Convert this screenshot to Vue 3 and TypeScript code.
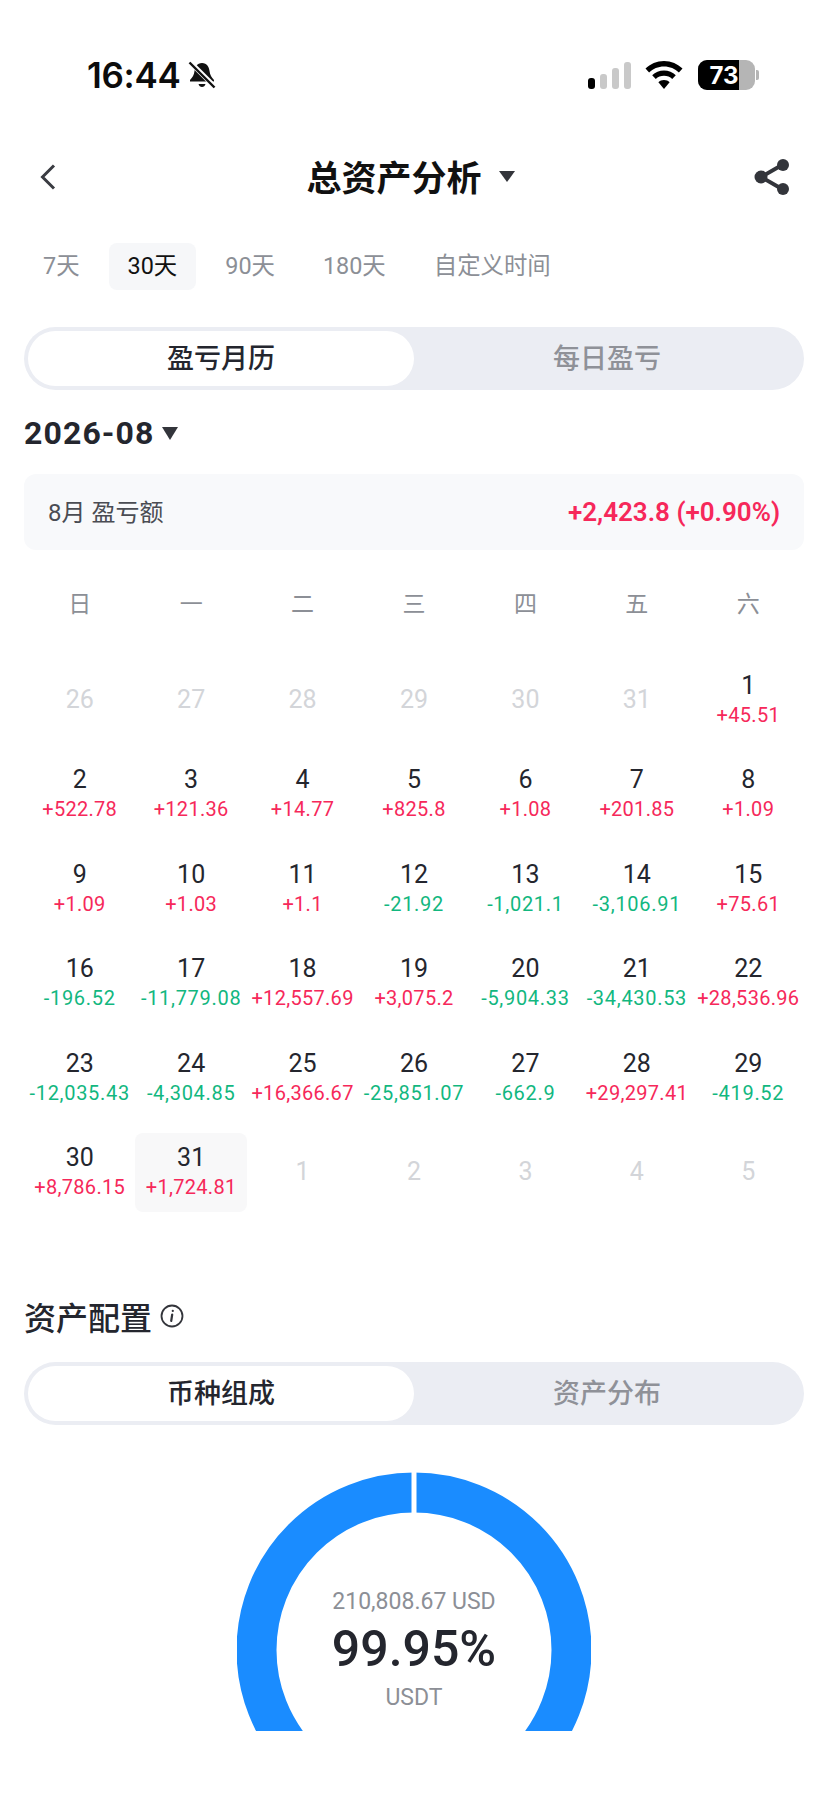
<script setup lang="ts">
interface Cell { day: number; value?: string; muted?: boolean; today?: boolean }
const tabs = ['7天', '30天', '90天', '180天', '自定义时间']
const weekdays = ['日', '一', '二', '三', '四', '五', '六']
const raw: [number, string?][] = [
  [1, '+45.51'], [2, '+522.78'], [3, '+121.36'], [4, '+14.77'], [5, '+825.8'], [6, '+1.08'], [7, '+201.85'], [8, '+1.09'],
  [9, '+1.09'], [10, '+1.03'], [11, '+1.1'], [12, '-21.92'], [13, '-1,021.1'], [14, '-3,106.91'], [15, '+75.61'],
  [16, '-196.52'], [17, '-11,779.08'], [18, '+12,557.69'], [19, '+3,075.2'], [20, '-5,904.33'], [21, '-34,430.53'], [22, '+28,536.96'],
  [23, '-12,035.43'], [24, '-4,304.85'], [25, '+16,366.67'], [26, '-25,851.07'], [27, '-662.9'], [28, '+29,297.41'], [29, '-419.52'],
  [30, '+8,786.15'], [31, '+1,724.81']
]
const cells: Cell[] = [
  ...[26, 27, 28, 29, 30, 31].map((day) => ({ day, muted: true })),
  ...raw.map(([day, value]) => ({ day, value, today: day === 31 })),
  ...[1, 2, 3, 4, 5].map((day) => ({ day, muted: true }))
]
</script>

<template>
  <div class="page">
    <header class="status">
      <div class="status-left">
        <span class="time">16:44</span>
        <svg class="bell" width="28" height="28" viewBox="0 0 28 28">
          <path d="M14 2c-5 0-7 4-7.500 8-.4 4-2 6-4.500 9v1.500h24V19c-2.500-3-4-5-4.500-9C21 6 19 2 14 2z" fill="#111" />
          <path d="M10.500 23h7c-.5 2-1.800 3-3.500 3s-3-1-3.500-3z" fill="#111" />
          <path d="M2 1l25 25" stroke="#fff" stroke-width="5" />
          <path d="M1.500 1.500l25 25" stroke="#111" stroke-width="2.400" />
        </svg>
      </div>
      <div class="status-right">
        <div class="signal">
          <i class="bar b1"></i><i class="bar b2"></i><i class="bar b3"></i><i class="bar b4"></i>
        </div>
        <svg class="wifi" width="38" height="28" viewBox="0 0 38 28">
          <path d="M19 0C11.700 0 5.200 2.900.5 7.600l3.600 3.800C8 7.700 13.200 5.400 19 5.400s11 2.300 14.900 6l3.600-3.800C32.800 2.900 26.300 0 19 0z" fill="#000" />
          <path d="M19 9.500c-4.600 0-8.700 1.800-11.800 4.700l3.600 3.800c2.100-2 5-3.200 8.200-3.200s6.100 1.200 8.200 3.200l3.600-3.800c-3.100-2.900-7.200-4.700-11.800-4.700z" fill="#000" />
          <path d="M19 19c-2.200 0-4.200.9-5.600 2.200L19 28l5.600-6.800C23.200 19.900 21.200 19 19 19z" fill="#000" />
        </svg>
        <div class="battery">
          <div class="battery-body">
            <div class="battery-fill"></div>
            <span class="battery-text">73</span>
          </div>
          <i class="battery-nub"></i>
        </div>
      </div>
    </header>

    <nav class="nav">
      <svg class="back" width="20" height="28" viewBox="0 0 20 28">
        <path d="M16 2.500 4.500 14 16 25.500" fill="none" stroke="#3a3c42" stroke-width="3" />
      </svg>
      <div class="nav-title">
        <span>总资产分析</span>
        <i class="tri nav-tri"></i>
      </div>
      <svg class="share" width="38" height="38" viewBox="0 0 38 38">
        <path d="M29 7 8 19l21 12" fill="none" stroke="#33353b" stroke-width="4" />
        <circle cx="30" cy="7" r="6" fill="#33353b" />
        <circle cx="8" cy="19" r="6.500" fill="#33353b" />
        <circle cx="30" cy="31" r="6" fill="#33353b" />
      </svg>
    </nav>

    <div class="tabs">
      <span v-for="t in tabs" :key="t" class="tab" :class="{ active: t === '30天' }">{{ t }}</span>
    </div>

    <div class="segment first">
      <span class="seg on">盈亏月历</span>
      <span class="seg">每日盈亏</span>
    </div>

    <div class="month">
      <span>2026-08</span>
      <i class="tri month-tri"></i>
    </div>

    <div class="summary">
      <span class="summary-label">8月 盈亏额</span>
      <span class="summary-value">+2,423.8 (+0.90%)</span>
    </div>

    <div class="weekdays">
      <span v-for="w in weekdays" :key="w">{{ w }}</span>
    </div>

    <div class="calendar">
      <div v-for="c in cells" :key="`${c.day}-${c.muted}`" class="cell" :class="{ today: c.today }">
        <span class="day" :class="{ muted: c.muted }">{{ c.day }}</span>
        <span v-if="c.value" class="val" :class="c.value.startsWith('+') ? 'up' : 'down'">{{ c.value }}</span>
      </div>
    </div>

    <div class="section-title">
      <span>资产配置</span>
      <svg width="24" height="24" viewBox="0 0 24 24">
        <circle cx="12" cy="12" r="10.500" fill="none" stroke="#33353b" stroke-width="1.800" />
        <path d="M12.800 6.800v.1M12.200 10.500l-1 6.500" fill="none" stroke="#33353b" stroke-width="2.200" stroke-linecap="round" />
      </svg>
    </div>

    <div class="segment second">
      <span class="seg on">币种组成</span>
      <span class="seg">资产分布</span>
    </div>

    <div class="donut">
      <svg width="354" height="259" viewBox="0 0 354 259">
        <circle cx="177" cy="178" r="157.500" fill="none" stroke="#1a8cff" stroke-width="40" />
        <rect x="174.500" y="0" width="5" height="44" fill="#fff" />
      </svg>
      <div class="donut-text">
        <span class="donut-usd">210,808.67 USD</span>
        <span class="donut-pct">99.95%</span>
        <span class="donut-coin">USDT</span>
      </div>
    </div>
  </div>
</template>

<style scoped>
.page {
  width: 828px;
  height: 1798px;
  overflow: hidden;
  background: #fff;
  box-sizing: border-box;
  font-family: Roboto, "Noto Sans CJK SC", sans-serif;
  color: #24262e;
  display: flex;
  flex-direction: column;
}
.status {
  height: 60px;
  margin-top: 45px;
  padding: 0 69px 0 87px;
  display: flex;
  justify-content: space-between;
  align-items: center;
  flex: none;
}
.status-left { display: flex; align-items: center; gap: 8px; }
.time { font-family: Inter, sans-serif; font-weight: 600; font-size: 35px; color: #0c0c0c; letter-spacing: -.3px; }
.status-right { display: flex; align-items: center; gap: 15px; }
.signal { display: flex; align-items: flex-end; gap: 5px; height: 28px; margin-right: -1px; }
.bar { width: 7px; border-radius: 3px; background: #c9c9c9; }
.b1 { height: 11px; background: #000; }
.b2 { height: 15px; }
.b3 { height: 21px; }
.b4 { height: 27px; }
.battery { display: flex; align-items: center; gap: 1px; }
.battery-body {
  position: relative;
  width: 57px;
  height: 30px;
  border-radius: 9px;
  background: #b5b5b5;
  overflow: hidden;
  display: flex;
  align-items: center;
  justify-content: center;
}
.battery-fill { position: absolute; left: 0; top: 0; bottom: 0; width: 41px; background: #000; }
.battery-text {
  position: relative;
  font-family: Inter, sans-serif;
  font-weight: 700;
  font-size: 24px;
  color: #fff;
  margin-right: 5px;
}
.battery-nub { width: 3px; height: 10px; border-radius: 0 2px 2px 0; background: #b5b5b5; }

.nav {
  height: 72px;
  margin-top: 36px;
  padding: 0 37px 0 38px;
  display: flex;
  align-items: center;
  justify-content: space-between;
  flex: none;
}
.nav-title {
  display: flex;
  align-items: center;
  gap: 17px;
  font-size: 35px;
  font-weight: 700;
  color: #111;
  margin: 0 0 4px 10px;
}
.tri { display: block; width: 0; height: 0; border-style: solid; border-color: #33353b transparent transparent; }
.nav-tri { border-width: 11px 8px 0; margin-top: 2px; }
.tabs {
  display: flex;
  gap: 10px;
  margin-top: 30px;
  padding: 0 24px;
  flex: none;
}
.tab {
  height: 47px;
  line-height: 47px;
  padding: 0 19px;
  font-size: 23.400px;
  color: #8c8f96;
  border-radius: 8px;
}
.tab.active { background: #f6f7f9; color: #111; }

.segment {
  margin: 0 24px;
  height: 63px;
  padding: 4px;
  box-sizing: border-box;
  background: #ebedf3;
  border-radius: 32px;
  display: flex;
  flex: none;
}
.first { margin-top: 37px; }
.second { margin-top: 24px; }
.seg {
  flex: 1;
  text-align: center;
  line-height: 57px;
  font-size: 27px;
  font-weight: 500;
  color: #8f9198;
}
.seg.on { background: #fff; color: #24262e; border-radius: 28px; }

.month {
  display: flex;
  align-items: center;
  gap: 8px;
  margin-top: 22px;
  padding: 0 24px;
  height: 42px;
  font-size: 32px;
  font-weight: 700;
  letter-spacing: 1.100px;
  flex: none;
}
.month-tri { border-width: 13px 8px 0; }
.summary {
  margin: 20px 24px 0;
  height: 76px;
  padding: 0 24px;
  border-radius: 12px;
  background: #f8f9fb;
  display: flex;
  align-items: center;
  justify-content: space-between;
  flex: none;
}
.summary-label { font-size: 24px; color: #4a4c53; margin-bottom: 4px; }
.summary-value { font-size: 26px; font-weight: 600; color: #f6285a; }

.weekdays {
  margin: 36px 24px 0;
  display: grid;
  grid-template-columns: repeat(7, 1fr);
  text-align: center;
  height: 38px;
  line-height: 38px;
  font-size: 23px;
  color: #8c8f96;
  flex: none;
}
.calendar {
  margin: 36px 24px 0;
  display: grid;
  grid-template-columns: repeat(7, 1fr);
  grid-auto-rows: 79px;
  row-gap: 15.600px;
  flex: none;
}
.cell {
  display: flex;
  flex-direction: column;
  align-items: center;
  justify-content: center;
  gap: 2px;
  border-radius: 8px;
  white-space: nowrap;
}
.cell.today { background: #f8f8f9; }
.day { font-size: 25px; line-height: 28px; }
.day.muted { color: #d3d5d9; }
.val { font-size: 20px; line-height: 26px; letter-spacing: .3px; }
.up { color: #f6285a; }
.down { color: #12b77f; letter-spacing: .7px; }

.section-title {
  margin-top: 82px;
  padding: 0 24px;
  display: flex;
  align-items: center;
  gap: 8px;
  height: 44px;
  font-size: 32px;
  font-weight: 500;
  flex: none;
}

.donut {
  position: relative;
  width: 354px;
  height: 259px;
  margin: 47px auto 0;
  flex: none;
}
.donut svg { display: block; }
.donut-text {
  position: absolute;
  left: 0;
  right: 0;
  top: 113px;
  display: flex;
  flex-direction: column;
  align-items: center;
}
.donut-usd { font-size: 23px; line-height: 34px; color: #8c8f96; }
.donut-pct { font-size: 50px; line-height: 60px; font-weight: 500; }
.donut-coin { font-size: 23px; line-height: 38px; color: #8c8f96; }
</style>
